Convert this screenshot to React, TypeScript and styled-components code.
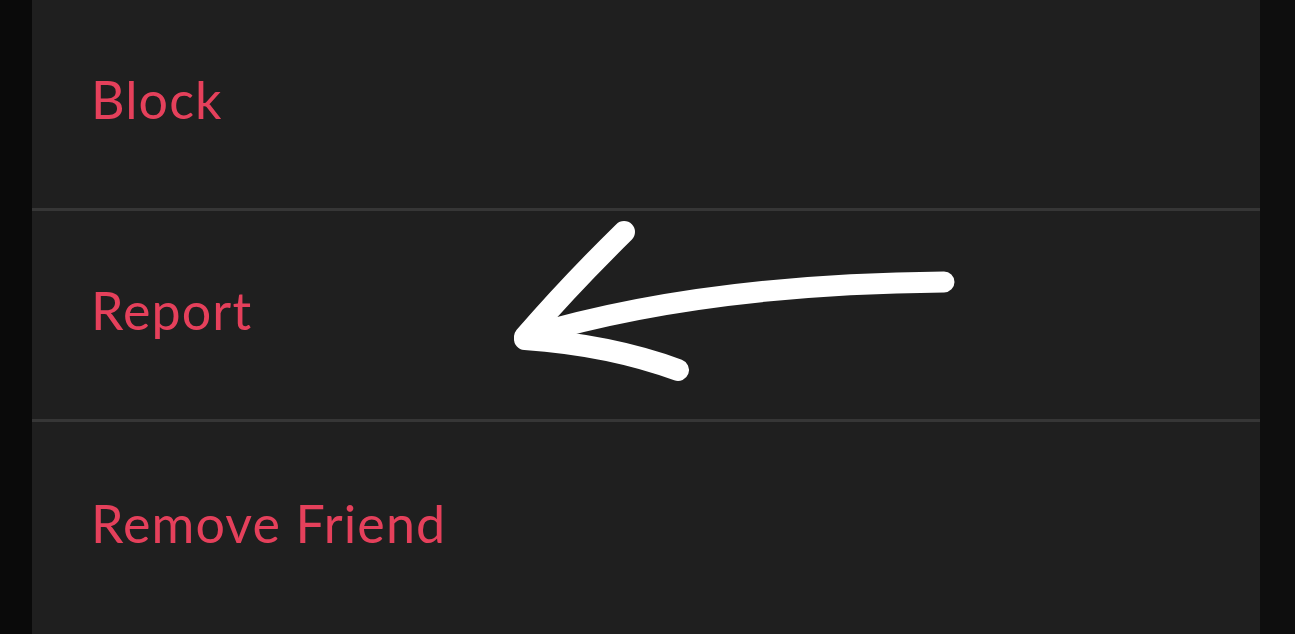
import * as React from "react";
import styled, { createGlobalStyle } from "styled-components";

const GlobalStyle = createGlobalStyle`
  html, body {
    margin: 0;
    padding: 0;
    background: #0b0b0b;
  }
  #root {
    height: 634px;
  }
`;

const Screen = styled.div`
  position: relative;
  display: flex;
  width: 1295px;
  height: 634px;
  overflow: hidden;
  background: #0d0d0d;
`;

const SideGutter = styled.div<{ $w: number; $bg: string }>`
  flex: 0 0 ${(p) => p.$w}px;
  background: ${(p) => p.$bg};
`;

const Sheet = styled.div`
  flex: 1;
  display: flex;
  flex-direction: column;
  background: #1f1f1f;
`;

const ActionRow = styled.div<{ $last?: boolean }>`
  box-sizing: border-box;
  height: 211px;
  flex-shrink: 0;
  display: flex;
  align-items: center;
  padding: 0 0 10px 59px;
  border-bottom: ${(p) => (p.$last ? "none" : "3px solid #363636")};
`;

const ActionLabel = styled.span`
  font-family: Lato, "Open Sans", sans-serif;
  font-size: 52px;
  font-weight: 400;
  color: #e5405b;
  letter-spacing: 1.1px;
`;

const ArrowLayer = styled.svg`
  position: absolute;
  inset: 0;
  pointer-events: none;
`;

function HandArrow() {
  return (
    <ArrowLayer viewBox="0 0 1295 634" width={1295} height={634}>
      <g fill="none" stroke="#ffffff" strokeLinecap="round" strokeLinejoin="round">
        <path d="M944 282 Q 700 284 525 337" strokeWidth={21} />
        <path d="M624 232 Q 570 285 525 337" strokeWidth={22} />
        <path d="M525 339 Q 610 345 678 370" strokeWidth={22} />
      </g>
    </ArrowLayer>
  );
}

export default function App() {
  const actions = ["Block", "Report", "Remove Friend"];
  return (
    <>
      <GlobalStyle />
      <Screen>
        <SideGutter $w={32} $bg="#0a0a0a" />
        <Sheet>
          {actions.map((a, i) => (
            <ActionRow key={a} $last={i === actions.length - 1}>
              <ActionLabel>{a}</ActionLabel>
            </ActionRow>
          ))}
        </Sheet>
        <SideGutter $w={35} $bg="#0e0e0e" />
        <HandArrow />
      </Screen>
    </>
  );
}
